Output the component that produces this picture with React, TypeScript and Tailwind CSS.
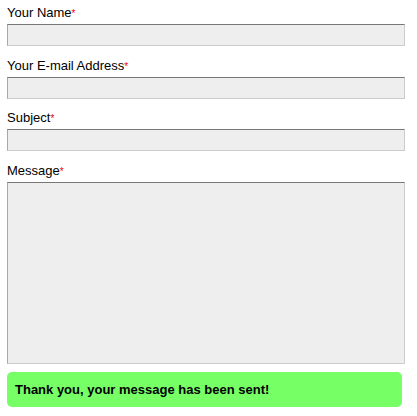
const fields = [
  { label: "Your Name", tall: false, gap: "mb-[11px]" },
  { label: "Your E-mail Address", tall: false, gap: "mb-[10px]" },
  { label: "Subject", tall: false, gap: "mb-[11px]" },
  { label: "Message", tall: true, gap: "mb-[8px]" },
];

export default function App() {
  return (
    <div className="w-[417px] h-[416px] bg-white pt-[4px] pl-[7px] pr-[12px] font-['Liberation_Sans',Arial,sans-serif] text-[13px] text-black">
      {fields.map((f) => (
        <div key={f.label} className={f.gap}>
          <label className="block h-[18px] leading-[18px] mb-[2px]">
            {f.label}
            <span className="text-red-600 text-[10px] align-text-top">*</span>
          </label>
          {f.tall ? (
            <textarea className="block w-[398px] h-[182px] resize-none bg-[#eeeeee] border border-t-[#777777] border-l-[#a8a8a8] border-r-[#cccccc] border-b-[#cccccc] outline-none" />
          ) : (
            <input
              type="text"
              className="block w-[398px] h-[22px] bg-[#eeeeee] border border-t-[#777777] border-l-[#a8a8a8] border-r-[#cccccc] border-b-[#cccccc] outline-none"
            />
          )}
        </div>
      ))}
      <div className="w-[395px] h-[35px] rounded-[5px] bg-[#77ff66] pl-[8px] flex items-center font-bold">
        Thank you, your message has been sent!
      </div>
    </div>
  );
}
